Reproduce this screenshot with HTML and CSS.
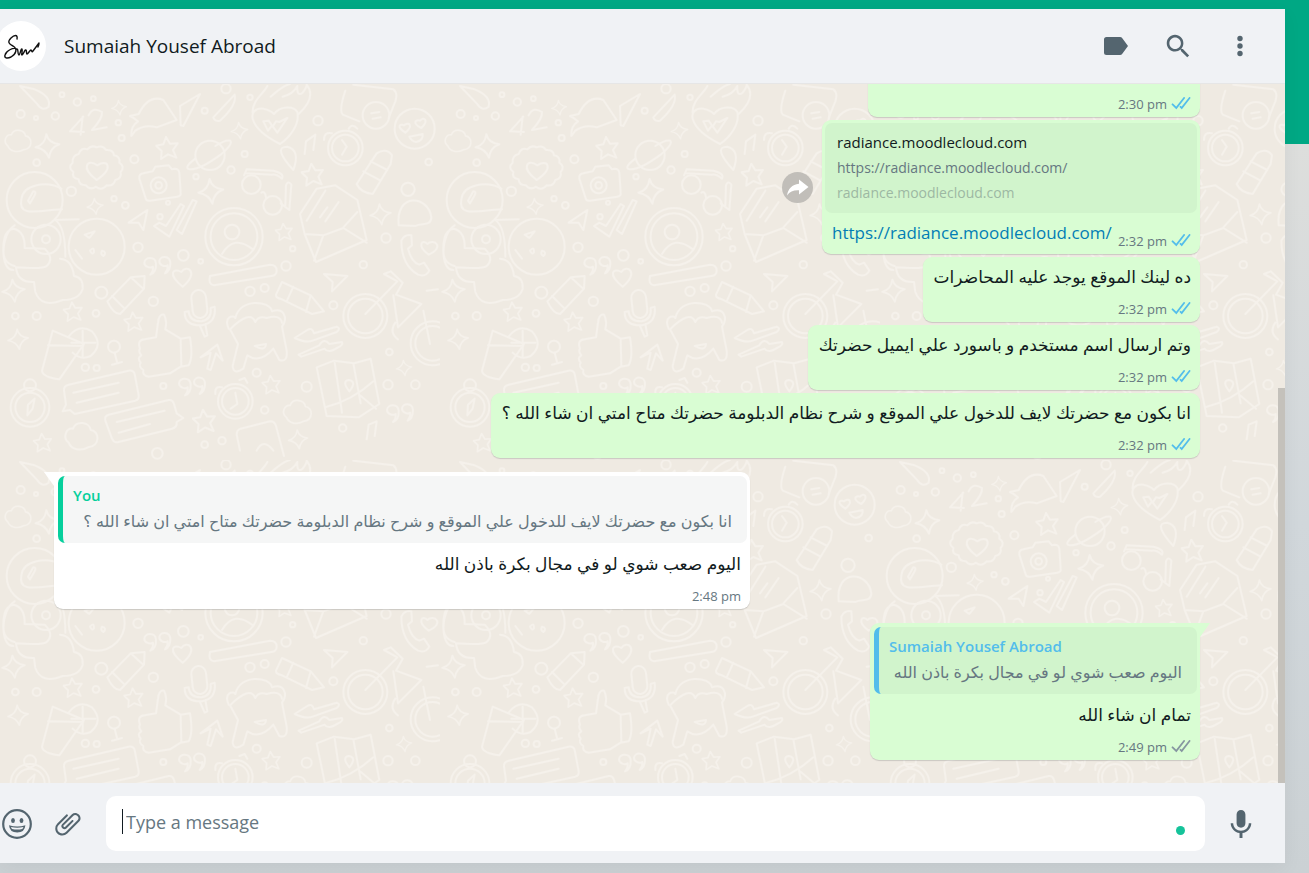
FILE: index.html
```
<!DOCTYPE html>
<html lang="en">
<head>
    <meta charset="UTF-8">
    <meta name="viewport" content="width=device-width, initial-scale=1.0">
    <title>Sumaiah Yousef Abroad</title>
    <link rel="stylesheet" href="styles.css">
</head>
<body>

    <svg class="defs" width="0" height="0" aria-hidden="true">
        <symbol id="ticks" viewBox="0 0 18 18">
            <path fill="currentColor" d="M17.394 5.035l-.57-.444a.434.434 0 0 0-.609.076l-6.39 8.198a.38.38 0 0 1-.577.039l-.427-.388a.381.381 0 0 0-.578.038l-.451.576a.497.497 0 0 0 .043.645l1.575 1.51a.38.38 0 0 0 .577-.039l7.483-9.602a.436.436 0 0 0-.076-.609zm-4.892 0l-.57-.444a.434.434 0 0 0-.609.076l-6.39 8.198a.38.38 0 0 1-.577.039l-2.614-2.556a.435.435 0 0 0-.614.007l-.505.516a.435.435 0 0 0 .007.614l3.887 3.8a.38.38 0 0 0 .577-.039l7.483-9.602a.435.435 0 0 0-.075-.609z"/>
        </symbol>
        <symbol id="star" viewBox="-36 -36 72 72">
            <path d="M-4-33 8-13 31-14 17 6 27 29 2 19-19 33-17 9-34-7-12-11z"/>
        </symbol>
        <symbol id="spark" viewBox="-40 -40 80 80">
            <path d="M-3-35Q4-8 36-5 9 4 5 35-5 9-35 4-7-4-3-35z"/>
        </symbol>
        <symbol id="cloud" viewBox="-55 -50 110 100">
            <path d="M-38 20C-58 5-45-25-25-22-15-48 25-42 28-18 55-15 58 30 20 34 0 46-30 42-38 20z"/>
        </symbol>
        <symbol id="quotes" viewBox="-45 -32 90 64">
            <path d="M-20 26Q-10 15-12 2C-20 8-38 2-38-10-36-28-6-30-3-8-2 10-8 22-20 26zM24 22Q34 10 32-2C22 4 6-4 7-15 10-32 38-32 40-10 40 6 34 18 24 22z"/>
        </symbol>
    </svg>

    <div class="app">
        <header class="header">
            <div class="avatar">
                <svg viewBox="0 0 50 50" width="50" height="50" aria-hidden="true">
                    <path d="M21 18c1-5-3-4-6-1-4 4-2 6 2 8 5 3 3 8-2 11-4 2-7 1-6-2 1-4 8-8 12-6 2 1 0 5 2 6 1 0 2-7 3-6 1 1-1 6 0 6s3-6 4-5 0 4 1 4 3-4 4-4c1 1 1 3 2 1l6-8c0 2-1 4-1 4"/>
                </svg>
            </div>
            <h1 class="name">Sumaiah Yousef Abroad</h1>
            <nav class="actions">
                <button class="icon-button" aria-label="Label">
                    <svg viewBox="0 0 30 30" width="30" height="30"><path fill="currentColor" d="M5.500 6h13.500q1.500 0 2.300 1.200L27 15l-5.700 7.800Q20.500 24 19 24H5.500Q3 24 3 21.500v-13Q3 6 5.500 6z"/></svg>
                </button>
                <button class="icon-button" aria-label="Search">
                    <svg viewBox="0 0 24 24" width="30" height="30"><path fill="currentColor" d="M15.900 14.300H15l-.300-.300c1-1.100 1.600-2.700 1.600-4.300 0-3.700-3-6.700-6.700-6.700S3 6 3 9.700s3 6.700 6.700 6.700c1.600 0 3.200-.600 4.300-1.600l.300.300v.800l5.100 5.100 1.500-1.500-5-5.200zm-6.200 0c-2.600 0-4.600-2.100-4.600-4.600s2.100-4.600 4.600-4.600 4.600 2.100 4.600 4.600-2 4.600-4.600 4.600z"/></svg>
                </button>
                <button class="icon-button" aria-label="Menu">
                    <svg viewBox="0 0 30 30" width="30" height="30" fill="currentColor"><circle cx="15" cy="7.500" r="2.700"/><circle cx="15" cy="15" r="2.700"/><circle cx="15" cy="22.500" r="2.700"/></svg>
                </button>
            </nav>
        </header>

        <main class="chat">
            <svg class="wallpaper" aria-hidden="true">
                <defs>
                    <pattern id="doodles" width="440" height="376" patternUnits="userSpaceOnUse" viewBox="0 0 1320 1128">
                        <g fill="none" stroke="#f5f1eb" stroke-width="6" stroke-linejoin="round" stroke-linecap="round">
                            <!-- small filler shapes -->
                            <use href="#star" x="466" y="156" width="72" height="72"/>
                            <use href="#star" x="902" y="236" width="72" height="72"/>
                            <use href="#star" x="824" y="416" width="56" height="56"/>
                            <use href="#star" x="188" y="652" width="62" height="62"/>
                            <use href="#star" x="370" y="682" width="62" height="62"/>
                            <use href="#star" x="784" y="872" width="60" height="60"/>
                            <use href="#star" x="576" y="974" width="74" height="74"/>
                            <use href="#star" x="98" y="1046" width="60" height="60"/>
                            <use href="#spark" x="102" y="146" width="80" height="80"/>
                            <use href="#spark" x="332" y="46" width="50" height="50"/>
                            <use href="#spark" x="590" y="280" width="84" height="84"/>
                            <use href="#spark" x="690" y="112" width="56" height="56"/>
                            <use href="#spark" x="258" y="340" width="54" height="54"/>
                            <use href="#spark" x="1106" y="356" width="70" height="70"/>
                            <use href="#spark" x="2" y="582" width="76" height="76"/>
                            <use href="#spark" x="20" y="732" width="68" height="68"/>
                            <use href="#spark" x="1186" y="826" width="52" height="52"/>
                            <use href="#spark" x="862" y="1034" width="64" height="64"/>
                            <use href="#cloud" x="8" y="130" width="92" height="80"/>
                            <use href="#cloud" x="834" y="940" width="116" height="86"/>
                            <use href="#cloud" x="186" y="1006" width="116" height="100"/>
                            <use href="#quotes" x="426" y="514" width="90" height="64"/>
                            <use href="#quotes" x="530" y="876" width="90" height="64"/>
                            <use href="#quotes" x="1154" y="956" width="90" height="64"/>
                            <!-- hearts and badges -->
                            <path d="M548 608C500 570 520 550 544 564 560 540 600 564 548 608z"/>
                            <path d="M840 180C740 130 740 70 790 74 810 78 815 82 822 90 840 66 880 64 892 84 900 120 870 160 840 180zM758 86C756 50 790 30 802 6M812 38Q850 4 870 0M848 38Q880 30 892 6 890 40 908 26 920 10 920 2 950 40 896 90M790 112l14 28 12-16 16 22 30-44-24 12-10-2-10 16-12-18z"/>
                            <path d="M290 190q18-8 28 8 22-2 24 16 20 4 16 22 18 12 4 28 4 20-16 24-6 20-26 16-16 18-32 4-18 12-30-4-22 0-22-18-22-4-16-22-18-14-2-28-2-22 18-26 6-20 26-14 12-14 28-6z"/>
                            <path d="M290 288C240 252 262 222 292 244 322 224 344 250 290 288z"/>
                            <!-- planet, camera, glasses -->
                            <circle cx="630" cy="214" r="44"/>
                            <path d="M586 224q-40 30-14 32 30 0 90-44 40-34 28-42-12-4-44 16"/>
                            <path d="M418 284q-2-14 12-16l28-6 8-14 40-4 10 12 8-2q12 0 14 12l4 60q2 10-10 12l-82 12q-12 2-14-10z"/>
                            <circle cx="476" cy="304" r="24"/><circle cx="476" cy="304" r="10"/>
                            <circle cx="754" cy="302" r="28"/><circle cx="818" cy="364" r="28"/>
                            <path d="M732 274l8-18 80 4q34 8 26 24-16-14-30-12l-78-4M784 326q10-8 14 14M842 358l26 20 6-76q-10-14-16 2l-2 60"/>
                            <!-- astronaut -->
                            <circle cx="104" cy="348" r="84"/>
                            <path d="M184 314C140 290 70 300 64 346 54 400 110 380 186 376M84 350l16-28q10 0 4 12l-14 24zM44 424C0 450 0 560 40 558M44 546q-36-10-34-50 0-60 32-62 34 10 32 58l60 2q30 30 6 52-10 10-92 4 4 46 54 44l4 30q18 50 82 24 50 0 60-34 2-34-26-38-6-50-42-52M166 408q30 20 30 110M166 408l70-2"/>
                            <circle cx="138" cy="466" r="44"/><circle cx="138" cy="466" r="12"/>
                            <circle cx="290" cy="488" r="84"/>
                            <path d="M254 452l30-10-16 20zM306 500q16 4 4 16-10-6-4-16zM226 498l20 26M270 500q12-14 12 4-6 10-12-4z"/>
                            <!-- paper plane, ticks, profile, letter -->
                            <path d="M386 416l56-38-12 60-14-22zM462 426l16-10 20 10 44-66 10 6-44 92zM530 438l48-90 12 4-44 98z"/>
                            <circle cx="702" cy="458" r="86"/><circle cx="702" cy="458" r="70"/><circle cx="696" cy="444" r="22"/>
                            <path d="M666 510q36-60 92-14"/>
                            <path d="M914 450l-14-60 50-76 56-10 66 44 28 120-152 66zM914 450l56 4 60-22 70 44M970 454l-28 76M920 410l56-90M1030 430l42-46M960 400l22-30M976 412l40-58"/>
                            <!-- clocks -->
                            <circle cx="1036" cy="192" r="52"/><circle cx="1036" cy="192" r="40"/>
                            <path d="M1026 168l14 20-14 24M972 168q0-26 24-20M1046 134q10-18 26 0"/>
                            <circle cx="706" cy="952" r="52"/><circle cx="706" cy="952" r="40"/>
                            <path d="M706 926l6 34-20 14M646 930q-2-26 20-20M718 888l16-6 8 14"/>
                            <circle cx="90" cy="970" r="58"/><circle cx="90" cy="970" r="44"/><circle cx="90" cy="904" r="18"/>
                            <path d="M104 944l-6 30-16 20 2-32z"/>
                            <!-- emoji, phone, bottle -->
                            <circle cx="1244" cy="134" r="60"/>
                            <path d="M1216 146c-30-20-14-28-4-22 14-12 30 0 4 22zM1264 132c-30-16-16-26-4-22 12-14 28 0 4 22zM1228 158l40-8q2 20-20 24-14-2-20-16z"/>
                            <circle cx="1128" cy="94" r="40"/>
                            <path d="M1114 88l24-4M1118 104l24-4M1036 20q-20 60-8 72l50 20M1060 2l120 14q14 10 6 36l-20 50"/>
                            <path d="M1204 470q10-20 30-16l2 30-12 10q10 40 34 48l14-6 16 24q-10 20-34 12-50-30-50-102zM1286 512c-40-30-16-48-4-32 20-18 54 10 4 32z"/>
                            <path d="M1070 300l60-92q30-18 46 6l-4 26-54 90q-36-4-48-30zM1090 262l52 28M1112 232l50 26"/>
                            <path d="M1196 424c-10-100 90-90 98-24-2 30-30 14-48 26z"/>
                            <!-- pencils, pill -->
                            <path d="M322 652l70-72 42-4-2 38-72 76q-20 0-38-38zM336 636l38 38M392 580l38 34"/>
                            <path d="M828 632l18-38 86 40 40 48-36 8-90-44q-20-4-18-14zM932 634l-14 50M880 608l-20 44"/>
                            <path d="M630 576l180-34q20 0 20 18 0 14-16 16l-172 28q-18-2-12-28z"/>
                            <!-- microphone, thumb, face -->
                            <rect x="576" y="618" width="44" height="84" rx="22" transform="rotate(-6 598 660)"/>
                            <path d="M554 684q0 42 52 40 44-8 38-56l-12 4q4 34-28 40-36 0-38-30zM600 726l14 32 8-4-6-34"/>
                            <path d="M420 794q-10-26 14-28l34-6 6-44q2-26 18-24 10 20 4 44l46 28 28-4q10 60-4 84l-24 4-32 20-64 10q-20-4-16-20-16-10-8-22-12-14 2-22-10-12-4-20zM542 766l2 80"/>
                            <path d="M686 734C670 700 700 690 706 702 720 640 810 650 816 682 850 670 866 700 846 728L860 800q4 36-22 28l-18-34q-40 46-78 20l-12 40q-30 20-32-8l16-66-24-44q60-60 76-22 10-20 34-12 40-12 46 14M764 786l34-6q-2 24-34 6z"/>
                            <!-- bicycle -->
                            <circle cx="1096" cy="696" r="66"/><circle cx="1096" cy="696" r="52"/>
                            <circle cx="1298" cy="778" r="66"/><circle cx="1298" cy="778" r="52"/>
                            <path d="M1096 690l96-98-40-22 20-8 36 34-20 36 76 28-70 70-14-96M1290 780l-20-100M1186 716q-20 30 8 50M1280 620l34-4"/>
                            <!-- drink, wrench, chat bubbles -->
                            <path d="M158 740l94 40-74 106q-50-6-52-26zM144 784l106 2M206 758q30-40 70-16 36 40-4 74-30 14-54-10M248 740v76M214 776h72"/>
                            <circle cx="342" cy="788" r="18"/><path d="M344 806l8 32M336 842l30-8"/>
                            <path d="M884 762l38-24q14-10 20 10l68-20q14 4 0 16l-72 26q-20 8-54-8zM896 812l62-28q14-24 30-4l38-6q4 10-12 16-30 20-40 4l-70 24z"/>
                            <path d="M192 920q-2-14 14-18l180-42q14-2 18 10l12 64q2 12-10 16l-182 40-14-12-22 4 10-20zM220 926l136-30M230 956l126-30M350 1014l144-34M356 1046l94-26"/>
                            <path d="M316 1010q-4-14 10-18l180-44q12-2 16 12l8 28 20 14-20 12q2 16-14 20l-160 40q-14 4-20-10z"/>
                            <path d="M602 820l50-38 16 48-20-22-16 50-10-4 10-48z"/>
                            <!-- map and handset -->
                            <path d="M950 850l52-20 60 8 50-14 26 136-62 40-96-4zM976 970q80-20 144-78M1080 934l48 40M1004 836l22 150M1060 838l22 120"/>
                            <path d="M1048 922q-24-30-2-34 26 4 2 34zM720 1100l-10-48q0-14 12-18l88-22q14 0 18 14l24 90M770 1100q20-40 50 0"/>
                            <!-- digits and arrows -->
                            <path d="M250 98l-40 44 42 2M248 98l-6 54M266 94q14-28 40-10 2 20-30 54l44-8"/>
                            <path d="M390 96l26-6q30-60 74-42l40 60-60 22q-36-10-64 10l-12 16q-2-30 20-44-10-10-24-16zM540 66l60-36-50 96-8-2zM640 100l64-68q8 30-44 78-16 4-20-10zM60 6l44 10q50 20 42 52-20 16-36-10z"/>
                            <path d="M880 258q-64-70-18-70 40 10 18 70zM972 570l70 6-46 46 2-28zM914 210l4-38 28-20-6 46M1100 1066l6-44 24-10-6 44"/>
                            <!-- dots -->
                            <g>
                                <circle cx="62" cy="90" r="12"/><circle cx="108" cy="102" r="6"/><circle cx="166" cy="96" r="11"/><circle cx="232" cy="54" r="11"/><circle cx="186" cy="32" r="7"/><circle cx="280" cy="44" r="7"/><circle cx="355" cy="116" r="8"/><circle cx="365" cy="162" r="9"/><circle cx="110" cy="236" r="10"/><circle cx="403" cy="226" r="12"/><circle cx="214" cy="322" r="14"/><circle cx="342" cy="344" r="8"/><circle cx="376" cy="364" r="10"/><circle cx="614" cy="80" r="9"/><circle cx="678" cy="14" r="14"/><circle cx="750" cy="40" r="8"/><circle cx="954" cy="110" r="14"/><circle cx="734" cy="210" r="9"/><circle cx="693" cy="258" r="11"/><circle cx="588" cy="278" r="8"/><circle cx="504" cy="356" r="6"/><circle cx="480" cy="398" r="8"/><circle cx="414" cy="490" r="14"/><circle cx="550" cy="514" r="16"/><circle cx="602" cy="532" r="7"/><circle cx="858" cy="546" r="14"/><circle cx="878" cy="494" r="8"/><circle cx="1158" cy="462" r="14"/><circle cx="1090" cy="542" r="11"/><circle cx="1286" cy="234" r="10"/><circle cx="1224" cy="316" r="20"/><circle cx="304" cy="626" r="18"/><circle cx="460" cy="652" r="14"/><circle cx="288" cy="688" r="10"/><circle cx="110" cy="696" r="12"/><circle cx="46" cy="696" r="10"/><circle cx="750" cy="622" r="14"/><circle cx="794" cy="612" r="12"/><circle cx="1000" cy="664" r="12"/><circle cx="770" cy="866" r="12"/><circle cx="920" cy="908" r="15"/><circle cx="1164" cy="902" r="14"/><circle cx="1246" cy="902" r="13"/><circle cx="1168" cy="804" r="10"/><circle cx="490" cy="906" r="9"/><circle cx="256" cy="850" r="11"/><circle cx="290" cy="852" r="9"/><circle cx="1028" cy="1032" r="11"/><circle cx="666" cy="1070" r="11"/><circle cx="472" cy="1108" r="16"/><circle cx="614" cy="1082" r="10"/><circle cx="794" cy="978" r="11"/>
                            </g>
                        </g>
                    </pattern>
                </defs>
                <rect width="100%" height="100%" fill="url(#doodles)"/>
            </svg>

            <div class="messages">
                <div class="message out first">
                    <div class="meta">2:30 pm <svg class="ticks read"><use href="#ticks"/></svg></div>
                </div>

                <div class="row">
                    <button class="forward" aria-label="Forward">
                        <svg viewBox="0 0 31 31" width="31" height="31"><path fill="#fff" d="M17 7.500 26.500 15 17 22.500V18.300C11.500 18 8 19.500 5 23.500 6 17 10 12.500 17 11.800z"/></svg>
                    </button>
                    <div class="message out link-message">
                        <div class="preview">
                            <div class="preview-title">radiance.moodlecloud.com</div>
                            <div class="preview-text">https://radiance.moodlecloud.com/</div>
                            <div class="preview-host">radiance.moodlecloud.com</div>
                        </div>
                        <div class="link-line">
                            <a class="link" href="https://radiance.moodlecloud.com/">https://radiance.moodlecloud.com/</a>
                            <div class="meta">2:32 pm <svg class="ticks read"><use href="#ticks"/></svg></div>
                        </div>
                    </div>
                </div>

                <div class="message out">
                    <p class="text" dir="rtl" lang="ar">ده لينك الموقع يوجد عليه المحاضرات</p>
                    <div class="meta">2:32 pm <svg class="ticks read"><use href="#ticks"/></svg></div>
                </div>

                <div class="message out">
                    <p class="text" dir="rtl" lang="ar">وتم ارسال اسم مستخدم و باسورد علي ايميل حضرتك</p>
                    <div class="meta">2:32 pm <svg class="ticks read"><use href="#ticks"/></svg></div>
                </div>

                <div class="message out">
                    <p class="text" dir="rtl" lang="ar">انا بكون مع حضرتك لايف للدخول علي الموقع و شرح نظام الدبلومة حضرتك متاح امتي ان شاء الله ؟</p>
                    <div class="meta">2:32 pm <svg class="ticks read"><use href="#ticks"/></svg></div>
                </div>

                <div class="message in tail">
                    <blockquote class="quote quote-you">
                        <div class="quote-name">You</div>
                        <p class="quote-text" dir="rtl" lang="ar">انا بكون مع حضرتك لايف للدخول علي الموقع و شرح نظام الدبلومة حضرتك متاح امتي ان شاء الله ؟</p>
                    </blockquote>
                    <p class="text" dir="rtl" lang="ar">اليوم صعب شوي لو في مجال بكرة باذن الله</p>
                    <div class="meta">2:48 pm</div>
                </div>

                <div class="message out tail">
                    <blockquote class="quote quote-contact">
                        <div class="quote-name">Sumaiah Yousef Abroad</div>
                        <p class="quote-text" dir="rtl" lang="ar">اليوم صعب شوي لو في مجال بكرة باذن الله</p>
                    </blockquote>
                    <p class="text" dir="rtl" lang="ar">تمام ان شاء الله</p>
                    <div class="meta">2:49 pm <svg class="ticks"><use href="#ticks"/></svg></div>
                </div>
            </div>
            <div class="scrollbar"></div>
        </main>

        <footer class="footer">
            <button class="icon-button" aria-label="Emoji">
                <svg viewBox="0 0 30 30" width="30" height="30" fill="currentColor"><circle cx="15" cy="15" r="13.800" fill="none" stroke="currentColor" stroke-width="2.200"/><ellipse cx="11" cy="11.500" rx="1.900" ry="2.500"/><ellipse cx="19.500" cy="11.500" rx="1.900" ry="2.500"/><path d="M7 16.200q8.200 2.600 16.400 0-.600 7.300-8.200 7.300T7 16.200z"/><path fill="#f0f2f5" d="M9 18q6.200 1.600 12.400 0-.400 1.400-1.200 2-5 1.200-10 0Q9.300 19.400 9 18z"/></svg>
            </button>
            <button class="icon-button" aria-label="Attach">
                <svg viewBox="0 0 24 24" width="30" height="30"><path fill="currentColor" d="M1.816 15.556v.002c0 1.502.584 2.912 1.646 3.972s2.472 1.647 3.974 1.647a5.580 5.580 0 0 0 3.972-1.645l9.547-9.548c.769-.768 1.147-1.767 1.058-2.817-.079-.968-.548-1.927-1.319-2.698-1.594-1.592-4.068-1.711-5.517-.262l-7.916 7.915c-.881.881-.792 2.250.214 3.261.959.958 2.423 1.053 3.263.215l5.511-5.512c.280-.280.267-.722.053-.936l-.244-.244c-.191-.191-.567-.349-.957.040l-5.506 5.506c-.180.180-.635.127-.976-.214-.098-.097-.576-.613-.213-.973l7.915-7.917c.818-.817 2.267-.699 3.230.262.500.501.802 1.100.849 1.685.051.573-.156 1.111-.589 1.543l-9.547 9.549a3.970 3.970 0 0 1-2.829 1.171 3.975 3.975 0 0 1-2.830-1.173 3.973 3.973 0 0 1-1.172-2.828c0-1.071.415-2.076 1.172-2.830l7.209-7.211c.157-.157.264-.579.028-.814L11.500 4.360a.572.572 0 0 0-.834.018l-7.205 7.207a5.577 5.577 0 0 0-1.645 3.971z"/></svg>
            </button>
            <div class="field">
                <span class="caret"></span>
                <input class="input" type="text" placeholder="Type a message" aria-label="Type a message">
                <span class="dot"></span>
            </div>
            <button class="icon-button" aria-label="Voice message">
                <svg viewBox="0 0 24 24" width="30" height="30"><path fill="currentColor" d="M11.999 14.942c2.001 0 3.531-1.530 3.531-3.531V4.350c0-2.001-1.530-3.531-3.531-3.531S8.469 2.350 8.469 4.350v7.061c0 2.001 1.530 3.531 3.530 3.531zm6.238-3.530c0 3.531-2.942 6.002-6.237 6.002s-6.237-2.471-6.237-6.002H3.761c0 4.001 3.178 7.297 7.061 7.885v3.884h2.354v-3.884c3.884-.588 7.061-3.884 7.061-7.885h-2z"/></svg>
            </button>
        </footer>
    </div>

</body>
</html>
```
FILE: styles.css
```
* {
    box-sizing: border-box;
}
body {
    margin: 0;
    padding: 9px 24px 10px 0;
    height: 100vh;
    font-family: "Open Sans", "Noto Sans", "DejaVu Sans", sans-serif;
    color: #111b21;
    background: linear-gradient(#00a884 144px, #dddedc 144px, #d1d7db 60%, #cbd1d4);
    overflow: hidden;
}
p, h1, blockquote {
    margin: 0;
}
button {
    border: none;
    padding: 0;
    background: none;
    cursor: pointer;
}
.defs {
    position: absolute;
}
.app {
    height: 100%;
    display: flex;
    flex-direction: column;
    background-color: #f0f2f5;
    box-shadow: 0 6px 18px rgba(11, 20, 26, 0.05);
}
.icon-button {
    display: flex;
    color: #54656f;
}

/* header */
.header {
    display: flex;
    align-items: center;
    height: 75px;
    flex: none;
    padding-right: 30px;
    border-bottom: 1px solid #e6e6e6;
}
.avatar {
    width: 50px;
    height: 50px;
    margin-left: -4px;
    border-radius: 50%;
    background-color: #fff;
}
.avatar path {
    fill: none;
    stroke: #111;
    stroke-width: 1.4;
    stroke-linecap: round;
    stroke-linejoin: round;
}
.name {
    flex: 1;
    margin-left: 18px;
    font-size: 19px;
    font-weight: 400;
}
.actions {
    display: flex;
    gap: 32px;
}

/* conversation */
.chat {
    position: relative;
    flex: 1;
    min-height: 0;
    background-color: #efeae2;
    overflow: hidden;
}
.wallpaper {
    position: absolute;
    inset: 0;
    width: 100%;
    height: 100%;
}
.messages {
    position: relative;
    height: 100%;
    display: flex;
    flex-direction: column;
    justify-content: flex-end;
    gap: 3px;
    padding: 0 85px 23px 54px;
}
.scrollbar {
    position: absolute;
    right: 0;
    bottom: 0;
    width: 7px;
    height: 395px;
    background-color: #c4c1bb;
}
.message {
    position: relative;
    padding: 8px 9px 3px 11px;
    border-radius: 9px;
    box-shadow: 0 1px 1px rgba(11, 20, 26, 0.16);
}
.out {
    align-self: flex-end;
    background-color: #d9fdd3;
}
.in {
    align-self: flex-start;
    background-color: #fff;
}
.first {
    width: 332px;
    padding-top: 40px;
}
.text {
    font-size: 17px;
    line-height: 24px;
}
.meta {
    display: flex;
    justify-content: flex-end;
    align-items: center;
    gap: 4px;
    margin-top: 10px;
    font-size: 13px;
    line-height: 20px;
    color: #667781;
}
.ticks {
    width: 20px;
    height: 20px;
    margin: -4px 0 0;
    color: #8696a0;
}
.read {
    color: #53bdeb;
}
.row {
    display: flex;
    align-self: flex-end;
    align-items: center;
    gap: 9px;
}
.forward {
    display: flex;
    border-radius: 50%;
    background-color: #c1beb9;
}
.link-message {
    width: 378px;
    padding: 3px;
}
.preview {
    padding: 7px 12px 8px;
    border-radius: 7px;
    background-color: #d1f4cc;
    line-height: 25px;
}
.preview-title {
    font-size: 15px;
}
.preview-text {
    font-size: 14px;
    color: #667781;
}
.preview-host {
    font-size: 14px;
    color: #9db8a3;
}
.link-line {
    display: flex;
    justify-content: space-between;
    align-items: flex-end;
    padding: 8px 6px 0 7px;
}
.link {
    font-size: 17px;
    line-height: 24px;
    padding-bottom: 6px;
    color: #027eb5;
    text-decoration: none;
}

/* messages that open a group carry a small tail */
.tail {
    margin-top: 11px;
    padding-top: 4px;
}
.tail::before {
    content: "";
    position: absolute;
    top: 0;
    width: 20px;
    height: 14px;
}
.in.tail::before {
    left: -10px;
    background-color: #fff;
    clip-path: polygon(0 0, 100% 0, 100% 100%, 50% 100%);
}
.out.tail::before {
    right: -10px;
    background-color: #d9fdd3;
    clip-path: polygon(0 0, 100% 0, 50% 100%, 0 100%);
}
.quote {
    position: relative;
    margin: 0 -6px 9px -7px;
    padding: 6px 15px 8px 10px;
    border-left: 5px solid;
    border-radius: 7px;
}
.quote-you {
    min-width: 689px;
    border-color: #06cf9c;
    background-color: #f5f6f6;
}
.quote-contact {
    min-width: 323px;
    border-color: #53bdeb;
    background-color: #d1f4cc;
}
.quote-name {
    font-size: 15px;
    font-weight: 600;
    line-height: 26px;
}
.quote-you .quote-name {
    color: #06cf9c;
}
.quote-contact .quote-name {
    color: #53bdeb;
}
.quote-text {
    font-size: 16px;
    line-height: 27px;
    color: #667781;
}

/* composer */
.footer {
    display: flex;
    align-items: center;
    flex: none;
    gap: 21px;
    padding: 13px 29px 12px 2px;
}
.field {
    flex: 1;
    display: flex;
    align-items: center;
    height: 55px;
    margin-left: 2px;
    padding: 0 20px 0 16px;
    border-radius: 10px;
    background-color: #fff;
}
.caret {
    width: 1px;
    height: 25px;
    margin-bottom: 4px;
    background-color: #111b21;
}
.input {
    flex: 1;
    border: none;
    outline: none;
    padding: 0 3px 4px;
    font-family: inherit;
    font-size: 18px;
    color: #111b21;
    background: none;
}
.input::placeholder {
    color: #667781;
}
.dot {
    width: 9px;
    height: 9px;
    margin-top: 14px;
    border-radius: 50%;
    background-color: #15c39a;
}
```
